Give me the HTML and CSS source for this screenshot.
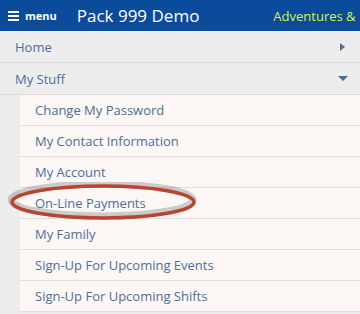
FILE: index.html
```html
<!DOCTYPE html>
<html lang="en">
<head>
  <meta charset="UTF-8" />
  <meta name="viewport" content="width=device-width, initial-scale=1.0" />
  <title>Pack 999 Demo</title>
  <link rel="stylesheet" href="styles.css">
</head>
<body>
  <!-- Top bar -->
  <header class="topbar">
    <span class="menu-btn"><span class="burger"><i></i><i></i><i></i></span>menu</span>
    <span class="site-title">Pack 999 Demo</span>
    <span class="tagline">Adventures &amp;</span>
  </header>

  <!-- Side menu -->
  <nav class="side-menu">
    <a class="top-item" href="#home">Home <span class="arrow-right"></span></a>
    <a class="top-item" href="#stuff">My Stuff <span class="arrow-down"></span></a>
    <ul class="sub-menu">
      <li><a href="#pw">Change My Password</a></li>
      <li><a href="#contact">My Contact Information</a></li>
      <li><a href="#account">My Account</a></li>
      <li><a href="#payments">On-Line Payments</a></li>
      <li><a href="#family">My Family</a></li>
      <li><a href="#events">Sign-Up For Upcoming Events</a></li>
      <li><a href="#shifts">Sign-Up For Upcoming Shifts</a></li>
    </ul>
  </nav>

  <!-- Hand-drawn highlight round the payments item -->
  <svg class="circle-mark" width="200" height="44" viewBox="0 0 200 44">
    <ellipse cx="98" cy="20" rx="91" ry="16" fill="none" stroke="rgba(0,0,0,0.18)" stroke-width="7" transform="translate(-1,-2)"/>
    <ellipse cx="98" cy="20" rx="91" ry="16" fill="none" stroke="#b8452f" stroke-width="3.5"/>
  </svg>
</body>
</html>
```

FILE: styles.css
```css
body { margin: 0; font-family: "Open Sans", Arial, sans-serif; background: #eeeded; overflow: hidden; }
a { text-decoration: none; }

.topbar {
  display: flex;
  align-items: center;
  height: 31px;
  background: #0b4b9c;
  color: #fff;
  white-space: nowrap;
  overflow: hidden;
}
.menu-btn { display: flex; align-items: center; gap: 6px; margin-left: 8px; font-size: 11px; font-weight: bold; }
.burger { display: flex; flex-direction: column; gap: 2px; width: 11px; }
.burger i { display: block; height: 2px; background: #fff; }
.site-title { margin-left: 20px; font-size: 17px; }
.tagline { margin-left: 74px; font-size: 13px; color: #d8f04a; }

.side-menu { display: flex; flex-direction: column; }
.top-item {
  display: flex;
  align-items: center;
  justify-content: space-between;
  height: 31px;
  padding: 0 15px;
  border-bottom: 1px solid #dcdada;
  color: #4b6f9b;
  font-size: 13px;
}
.arrow-right { width: 0; height: 0; border-top: 4px solid transparent; border-bottom: 4px solid transparent; border-left: 5px solid #4b6f9b; }
.arrow-down { width: 0; height: 0; border-left: 5px solid transparent; border-right: 5px solid transparent; border-top: 5px solid #4b6f9b; margin-right: -3px; }

.sub-menu { list-style: none; margin: 0 0 0 20px; padding: 0; background: #fdf7f6; }
.sub-menu li { border-bottom: 1px solid #e2dcdb; }
.sub-menu a { display: flex; align-items: center; height: 30px; padding-left: 15px; color: #4b6f9b; font-size: 13px; }

.circle-mark { position: absolute; left: 5px; top: 182px; }
```
